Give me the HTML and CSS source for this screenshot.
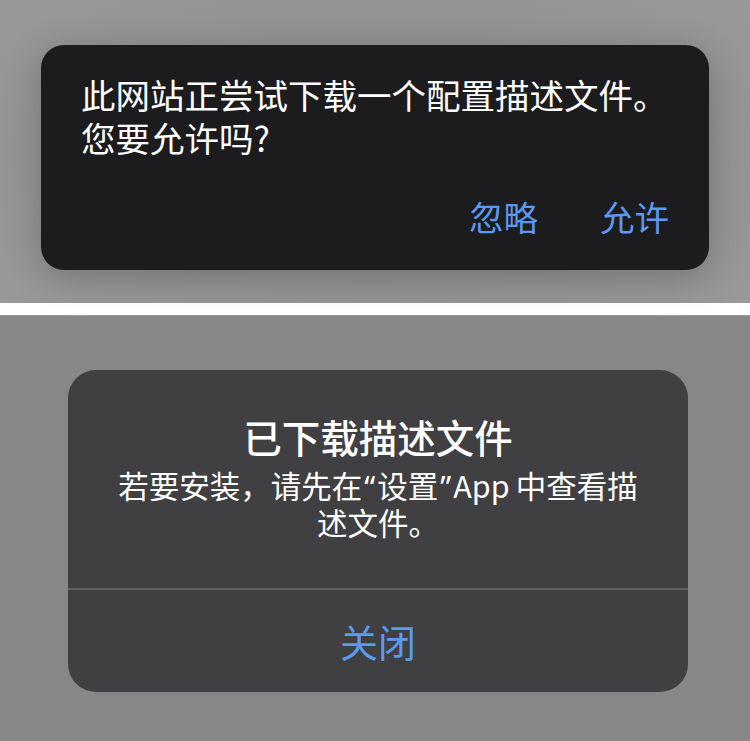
FILE: index.html
```html
<!DOCTYPE html>
<html lang="zh-CN">
<head>
<meta charset="utf-8">
<title>描述文件</title>
<link rel="stylesheet" href="styles.css">
</head>
<body>
  <section class="panel panel-top">
    <div class="sheet">
      <div class="sheet-message">
        <div class="line">此网站正尝试下载一个配置描述文件。</div>
        <div class="line">您要允许吗?</div>
      </div>
      <div class="sheet-actions">
        <span class="action">忽略</span>
        <span class="action">允许</span>
      </div>
    </div>
  </section>
  <div class="divider"></div>
  <section class="panel panel-bottom">
    <div class="alert">
      <div class="alert-body">
        <h2 class="alert-title">已下载描述文件</h2>
        <div class="alert-text">
          <div class="line">若要安装，请先在<span class="quote">“</span>设置<span class="quote">”</span><span class="latin">App</span>中查看描</div>
          <div class="line">述文件。</div>
        </div>
      </div>
      <div class="alert-button">关闭</div>
    </div>
  </section>
</body>
</html>
```

FILE: styles.css
```css
html, body {
  margin: 0;
  padding: 0;
}

body {
  width: 750px;
  height: 741px;
  overflow: hidden;
  background: #ffffff;
  font-family: "Noto Sans CJK SC", "Noto Sans", sans-serif;
  color: #ffffff;
}

.panel {
  box-sizing: border-box;
  display: flex;
  flex-direction: column;
}

/* upper half: dark action sheet on a light grey backdrop */
.panel-top {
  height: 303px;
  padding: 45px 41px 0;
  background: radial-gradient(ellipse 70% 75% at 50% 50%, #8b8b8b 0%, #929292 55%, #999999 100%);
}

.sheet {
  width: 668px;
  height: 225px;
  box-sizing: border-box;
  padding: 28px 40px 0 40px;
  background: #1c1c1e;
  border-radius: 23px;
  box-shadow: 0 8px 36px rgba(0, 0, 0, 0.22);
}

.sheet-message {
  font-size: 34.5px;
  font-weight: 400;
  white-space: nowrap;
}

.sheet-message .line {
  height: 43px;
  line-height: 43px;
}

.sheet-actions {
  display: flex;
  justify-content: flex-end;
  gap: 62px;
  margin-top: 36px;
}

.action {
  font-size: 34.5px;
  line-height: 43px;
  color: #5b9af2;
}

.divider {
  height: 12px;
  background: #ffffff;
}

/* lower half: centered alert */
.panel-bottom {
  height: 426px;
  padding: 54px 0 0 68px;
  background: #878787;
  border-top: 1px solid #9b9b9b;
}

.alert {
  width: 620px;
  height: 322px;
  display: flex;
  flex-direction: column;
  background: #403f41;
  border-radius: 28px;
  overflow: hidden;
}

.alert-body {
  box-sizing: border-box;
  height: 220px;
  padding-top: 43px;
  text-align: center;
  border-bottom: 2px solid #605f61;
}

.alert-title {
  margin: 0;
  font-size: 38.5px;
  line-height: 46px;
  font-weight: 500;
}

.alert-text {
  margin-top: 8px;
  font-size: 30.5px;
  font-weight: 400;
  white-space: nowrap;
}

.alert-text .line {
  height: 37px;
  line-height: 37px;
}

/* narrow curly quotes and a little air around the Latin word */
.quote {
  font-family: "Noto Sans", "DejaVu Sans", sans-serif;
  margin: 0 2px;
}

.latin {
  margin-right: 6px;
}

.alert-button {
  flex: 1;
  display: flex;
  align-items: center;
  justify-content: center;
  font-size: 38px;
  line-height: 46px;
  color: #5b9af2;
}
```
